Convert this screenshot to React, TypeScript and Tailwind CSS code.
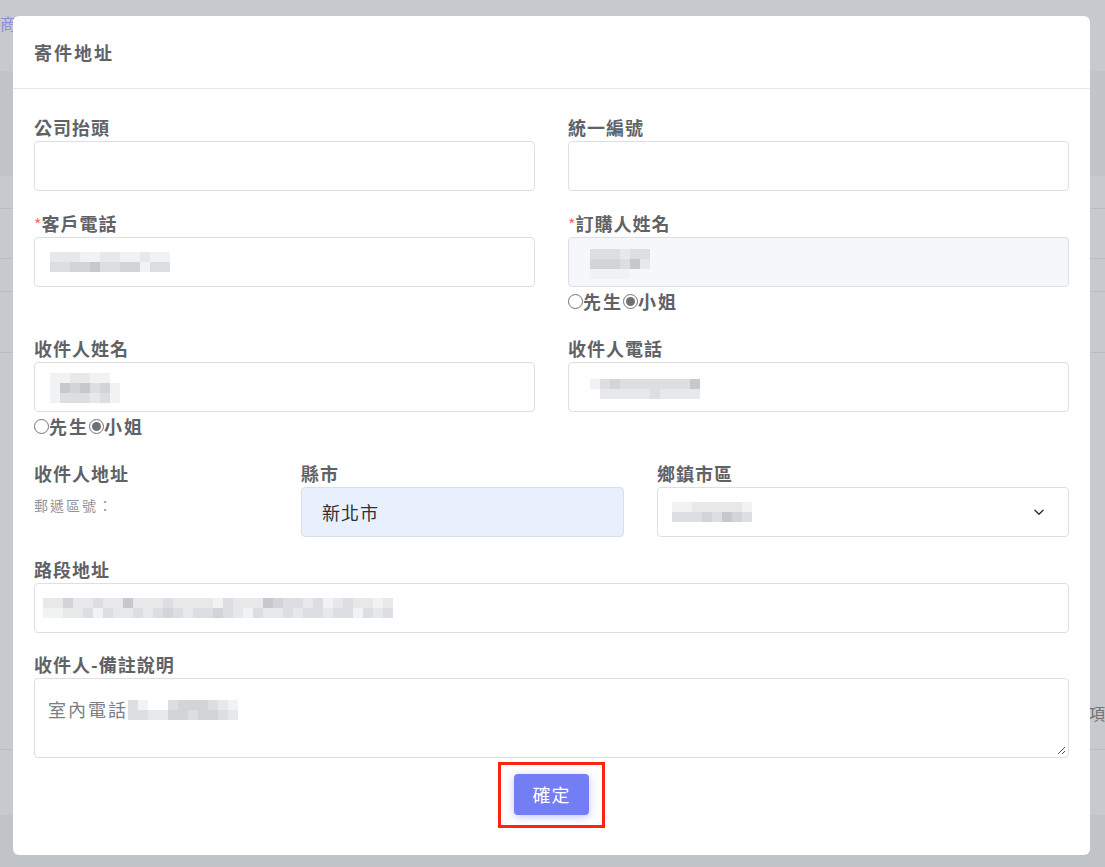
const FONT = { fontFamily: '"Noto Sans CJK TC", "Noto Sans", sans-serif' };

const shade: Record<string, string> = {
  '0': 'bg-transparent',
  '1': 'bg-[#f1f2f4]',
  '2': 'bg-[#e7e8ea]',
  '3': 'bg-[#dddee1]',
  '4': 'bg-[#d2d4d7]',
  '5': 'bg-[#c6c8cb]',
};

// pixelated (mosaic) text, 10px cells
function Mosaic({ rows }: { rows: string[] }) {
  return (
    <div className="flex flex-col">
      {rows.map((r, i) => (
        <div key={i} className="flex">
          {r.split('').map((c, j) => (
            <div key={j} className={`h-[10px] w-[10px] ${shade[c]}`} />
          ))}
        </div>
      ))}
    </div>
  );
}

function Label({ children, required = false }: { children: React.ReactNode; required?: boolean }) {
  return (
    <div className="mb-[2px] h-[24px] text-[18px] font-bold leading-[24px] tracking-[1px] text-[#606266]">
      {required && <span className="mr-[-1px] text-[16px] font-normal leading-none text-[#f56c6c]">*</span>}
      {children}
    </div>
  );
}

function Field({ children, className = '' }: { children?: React.ReactNode; className?: string }) {
  return (
    <div className={`flex h-[50px] items-center rounded-[4px] border border-[#dcdfe6] ${className}`}>
      {children}
    </div>
  );
}

function Radio({ checked = false }: { checked?: boolean }) {
  return (
    <span className="inline-flex h-[15px] w-[15px] items-center justify-center rounded-full border-[1.5px] border-[#6f7275]">
      {checked && <span className="h-[9px] w-[9px] rounded-full bg-[#6f7275]" />}
    </span>
  );
}

function Gender() {
  return (
    <div className="flex h-[29px] items-center text-[18px] font-bold tracking-[2px] text-[#606266]">
      <Radio />
      <span>先生</span>
      <Radio checked />
      <span>小姐</span>
    </div>
  );
}

function Backdrop() {
  return (
    <div className="absolute inset-0">
      <div className="absolute left-0 right-0 top-[71px] h-[105px] bg-[#c1c4c8]" />
      <div className="absolute left-0 right-0 top-[208px] h-px bg-[#b9bcc0]" />
      <div className="absolute left-0 right-0 top-[258px] h-px bg-[#b9bcc0]" />
      <div className="absolute left-0 right-0 top-[291px] h-px bg-[#b9bcc0]" />
      <div className="absolute left-0 right-0 top-[352px] h-px bg-[#b9bcc0]" />
      <div className="absolute left-0 right-0 top-[749px] h-px bg-[#b9bcc0]" />
      <div className="absolute bottom-0 left-0 right-0 h-[52px] bg-[#c0c3c7]" />
      <div className="absolute left-0 top-[11px] text-[16px] text-[#8a8fd4]">商</div>
      <div className="absolute left-[1089px] top-[701px] text-[16px] text-[#707377]">項</div>
    </div>
  );
}

export default function App() {
  return (
    <div className="relative h-[867px] w-full overflow-hidden bg-[#c6c9cd]" style={FONT}>
      <Backdrop />
      <div className="absolute inset-0 pl-[13px] pt-[16px]">
        <div className="h-[839px] w-[1077px] rounded-[6px] bg-white">
          <div className="flex h-[73px] items-center border-b border-[#e4e7ed] px-[21px]">
            <h2 className="text-[18px] font-bold tracking-[2px] text-[#606266]">寄件地址</h2>
          </div>

          <div className="px-[21px] pt-[26px]">
            <div className="grid grid-cols-2 gap-x-[33px]">
              <div className="mb-[20px]">
                <Label>公司抬頭</Label>
                <Field />
              </div>
              <div className="mb-[20px]">
                <Label>統一編號</Label>
                <Field />
              </div>

              <div>
                <Label required>客戶電話</Label>
                <Field className="pl-[15px]">
                  <Mosaic rows={['222112211211', '334453344133']} />
                </Field>
              </div>
              <div className="mb-[20px]">
                <Label required>訂購人姓名</Label>
                <Field className="bg-[#f5f7fa] pl-[21px]">
                  <div className="mt-[4px]">
                    <Mosaic rows={['333233', '444352', '111100']} />
                  </div>
                </Field>
                <Gender />
              </div>

              <div className="mb-[20px]">
                <Label>收件人姓名</Label>
                <Field className="pl-[15px]">
                  <div className="mt-[2px]">
                    <Mosaic rows={['1122110', '1545341', '1333231']} />
                  </div>
                </Field>
                <Gender />
              </div>
              <div className="mb-[20px]">
                <Label>收件人電話</Label>
                <Field className="pl-[21px]">
                  <div className="mt-[4px]">
                    <Mosaic rows={['13433333335', '02222232222']} />
                  </div>
                </Field>
              </div>
            </div>

            <div className="mb-[20px] grid grid-cols-[234px_323px_1fr] gap-x-[33px]">
              <div>
                <div className="h-[24px] text-[18px] font-bold leading-[24px] tracking-[1px] text-[#606266]">收件人地址</div>
                <div className="mt-[8px] text-[14px] leading-[24px] tracking-[2px] text-[#909399]">郵遞區號：</div>
              </div>
              <div>
                <Label>縣市</Label>
                <Field className="bg-[#e8f0fe] pl-[20px] text-[18px] tracking-[1px] text-[#303133]">新北市</Field>
              </div>
              <div>
                <Label>鄉鎮市區</Label>
                <Field className="justify-between pl-[14px] pr-[22px]">
                  <Mosaic rows={['11222221', '33343543']} />
                  <svg width="14" height="14" viewBox="0 0 24 24" fill="none" stroke="#303133" strokeWidth="2.4" strokeLinecap="round" strokeLinejoin="round">
                    <path d="M5 9l7 7 7-7" />
                  </svg>
                </Field>
              </div>
            </div>

            <div className="mb-[19px]">
              <Label>路段地址</Label>
              <Field className="pl-[8px]">
                <Mosaic rows={['22422322522232222132225433231232212', '11223132232343233432132232332331323']} />
              </Field>
            </div>

            <div>
              <Label>收件人-備註說明</Label>
              <div className="relative h-[80px] rounded-[4px] border border-[#dcdfe6] pl-[13px] pt-[17px]">
                <div className="flex items-center text-[18px] tracking-[2px] text-[#7b7e84]">
                  <span>室內電話</span>
                  <Mosaic rows={['310034443210', '332244344320']} />
                </div>
                <svg className="absolute bottom-[2px] right-[2px]" width="10" height="10" viewBox="0 0 10 10" stroke="#555" strokeWidth="1">
                  <path d="M9 2L2 9M9 6L6 9" />
                </svg>
              </div>
            </div>

            <div className="mt-[4px] flex justify-center">
              <div className="border-[3px] border-[#ff2314] px-[13px] pb-[10px] pt-[9px]">
                <button
                  type="button"
                  className="h-[41px] w-[75px] rounded-[4px] bg-[#737ef5] text-[18px] tracking-[1px] text-white shadow-[0_2px_8px_rgba(115,126,245,0.45)]"
                >
                  確定
                </button>
              </div>
            </div>
          </div>
        </div>
      </div>
    </div>
  );
}
